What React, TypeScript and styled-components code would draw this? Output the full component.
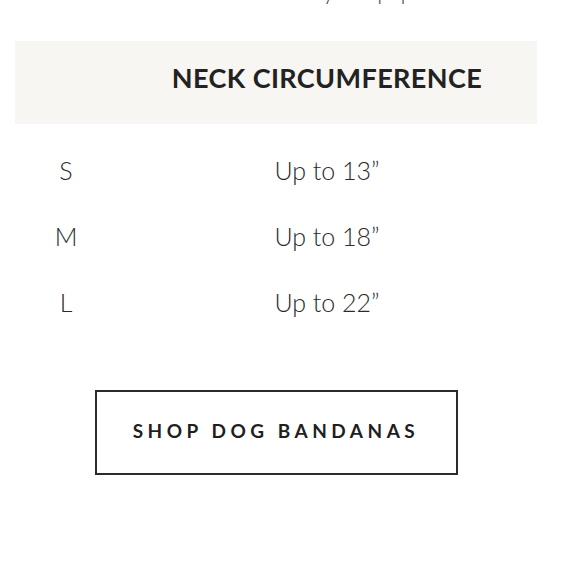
import React from "react";
import styled, { createGlobalStyle } from "styled-components";

const GlobalStyle = createGlobalStyle`
  html, body {
    margin: 0;
    padding: 0;
    background: #ffffff;
  }
  body {
    font-family: Lato, "Open Sans", sans-serif;
    color: #232323;
    overflow: hidden;
  }
`;

const Page = styled.div`
  width: 522px;
  margin-left: 15px;
`;

const Intro = styled.p`
  margin: -21px 0 37px;
  padding-right: 76px;
  font-size: 21px;
  line-height: 25px;
  font-weight: 300;
  text-align: center;
  word-spacing: 8px;
  color: #333;
`;

const SizeGrid = styled.div`
  display: grid;
  grid-template-columns: 102px 1fr;
`;

const HeadCell = styled.div`
  box-sizing: border-box;
  height: 83px;
  padding-bottom: 10px;
  background: #f8f6f2;
  display: flex;
  align-items: center;
  justify-content: center;
  font-size: 27px;
  font-weight: 700;
  letter-spacing: 0.4px;
  color: #222;
`;

const Spacer = styled.div`
  grid-column: 1 / -1;
  height: 13px;
`;

const Cell = styled.div`
  height: 66px;
  display: flex;
  align-items: center;
  justify-content: center;
  font-size: 25px;
  font-weight: 300;
  color: #2a2a2a;
`;

const Actions = styled.div`
  display: flex;
  justify-content: center;
  padding-top: 55px;
`;

const ShopButton = styled.a`
  box-sizing: border-box;
  width: 363px;
  height: 85px;
  padding: 0 0 5px 0;
  border: 2px solid #2b2b2b;
  display: flex;
  align-items: center;
  justify-content: center;
  font-size: 19px;
  font-weight: 700;
  letter-spacing: 4.5px;
  color: #1f1f1f;
  text-decoration: none;
`;

const sizes = [
  { size: "S", neck: "Up to 13”" },
  { size: "M", neck: "Up to 18”" },
  { size: "L", neck: "Up to 22”" },
];

export default function App() {
  return (
    <>
      <GlobalStyle />
      <Page>
        <Intro>Choose the best size for your pup.</Intro>
        <SizeGrid>
          <HeadCell />
          <HeadCell>NECK CIRCUMFERENCE</HeadCell>
          <Spacer />
          {sizes.map((row) => (
            <React.Fragment key={row.size}>
              <Cell>{row.size}</Cell>
              <Cell>{row.neck}</Cell>
            </React.Fragment>
          ))}
        </SizeGrid>
        <Actions>
          <ShopButton href="#">SHOP DOG BANDANAS</ShopButton>
        </Actions>
      </Page>
    </>
  );
}
